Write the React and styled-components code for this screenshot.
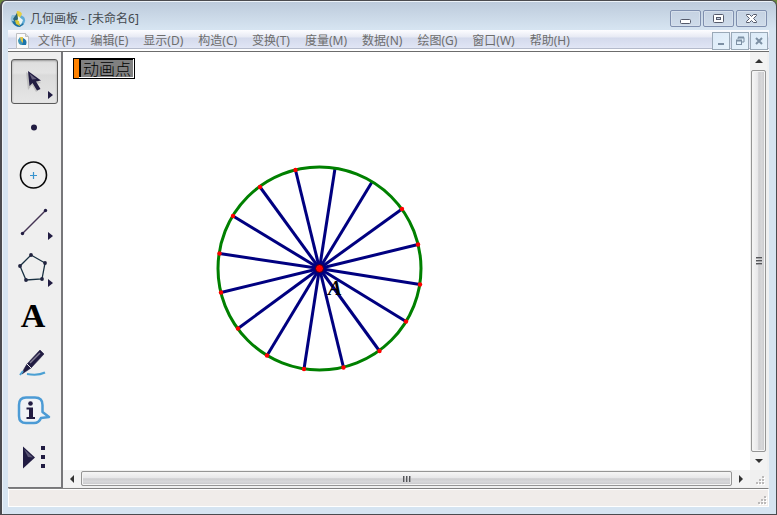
import React from 'react';
import styled, { createGlobalStyle } from 'styled-components';

const Global = createGlobalStyle`
  * { box-sizing: border-box; }
  body { margin: 0; background: #6b8a3c; font-family: "Noto Sans", "Noto Sans CJK SC", sans-serif; font-size: 12px; }
  button { font: inherit; padding: 0; margin: 0; cursor: default; }
  svg { display: block; }
`;

const Window = styled.div`
  display: flex;
  flex-direction: column;
  min-height: 100vh;
  padding: 0 7px 7px 6px;
  border: 1px solid #4b4b4f;
  border-left-width: 2px;
  border-radius: 6px 6px 0 0;
  background: linear-gradient(#bccadb 0, #d6e4f1 28px, #d6e4f1 100%);
  box-shadow: inset 1px 1px 0 #edf3f9;
`;

const TitleBar = styled.header`
  display: flex;
  align-items: center;
  height: 29px;
  padding: 6px 2px 0 2px;
`;

const Title = styled.h1`
  flex: 1;
  margin: 0 0 0 4px;
  font-size: 12px;
  line-height: 18px;
  font-weight: 400;
  color: #44494f;
  white-space: nowrap;
`;

const CaptionButtons = styled.div`
  display: flex;
  gap: 2px;
`;

const CaptionButton = styled.button`
  display: grid;
  place-items: center;
  width: 31px;
  height: 17px;
  border: 1px solid #7f8fae;
  border-radius: 2px;
  background: linear-gradient(#c5d2e2, #cfdcea);
  box-shadow: inset 0 0 0 1px #d6e0ec;
`;

const MenuBar = styled.nav`
  display: flex;
  align-items: center;
  height: 21px;
  padding-left: 7px;
  background: linear-gradient(#fdfdff 0, #e7eaf4 7px, #d4daec 8px, #dfe4f4 17px, #e4e8f4 18px, #b4bacb 18px, #b4bacb 19px, #fff 19px);
`;

const MenuList = styled.div`
  display: flex;
  flex: 1;
  gap: 15px;
  margin-left: 8px;
`;

const MenuItem = styled.button`
  border: 0;
  background: none;
  color: #6d6d6d;
  line-height: 18px;
  white-space: nowrap;
`;

const ChildButtons = styled.div`
  display: flex;
  gap: 1px;
  margin-right: 1px;
`;

const ChildButton = styled.button`
  display: grid;
  place-items: center;
  width: 18px;
  height: 18px;
  border: 1px solid #9aa9b8;
  background: linear-gradient(135deg, #dceaf8, #e6f2fb);
`;

const Body = styled.main`
  display: flex;
  flex: 1;
  border-top: 1px solid #6c6c6c;
  background: #f0f0f0;
`;

const Toolbox = styled.div`
  flex: none;
  display: flex;
  flex-direction: column;
  gap: 2px;
  width: 55px;
  padding: 7px 3px 6px;
  border-right: 2px solid #77777a;
  border-bottom: 1px solid #77777a;
  background: #efefef;
`;

const ToolButton = styled.button`
  display: grid;
  place-items: center;
  width: 47px;
  height: 45px;
  border: 1px solid ${(p) => (p.$active ? '#5a5a5a' : 'transparent')};
  border-radius: 3px;
  background: ${(p) => (p.$active ? 'linear-gradient(#dedede, #e3e3e3 30%, #dadada 35%, #e6e6e6)' : 'none')};
  box-shadow: ${(p) => (p.$active ? 'inset 0 1px 2px #999' : 'none')};
`;

const Document = styled.section`
  flex: 1;
  min-width: 0;
  display: grid;
  grid-template-columns: 1fr 17px;
  grid-template-rows: 1fr 17px;
  padding: 0 2px 1px 0;
`;

const Canvas = styled.div`
  position: relative;
  overflow: hidden;
  background: #fff;
`;

const Sketch = styled.svg`
  position: absolute;
  left: 147px;
  top: 108px;
`;

const ActionButton = styled.button`
  position: absolute;
  left: 10px;
  top: 6px;
  display: flex;
  width: 62px;
  height: 21px;
  border: 1px solid #000;
  background: #fff;
`;

const ActionGrip = styled.span`
  width: 5px;
  height: 19px;
  background: #ff8200;
`;

const ActionLabel = styled.span`
  flex: 1;
  height: 18px;
  border: 0 solid #000;
  border-width: 1px 0 0 2px;
  margin-right: 1px;
  padding-left: 2px;
  background: #808080;
  color: #000;
  font-family: "Noto Sans CJK SC", sans-serif;
  font-weight: 300;
  font-size: 16px;
  line-height: 17px;
  text-align: left;
  white-space: nowrap;
`;

const Scrollbar = styled.div`
  display: flex;
  flex-direction: ${(p) => (p.$vertical ? 'column' : 'row')};
  background: #f0f0f0;
`;

const ScrollArrow = styled.button`
  flex: none;
  display: grid;
  place-items: center;
  width: ${(p) => (p.$vertical ? '17px' : '18px')};
  height: ${(p) => (p.$vertical ? '18px' : '17px')};
  border: 0;
  background: #f3f3f3;
`;

const ScrollThumb = styled.div`
  flex: 1;
  display: grid;
  place-items: center;
  margin: ${(p) => (p.$vertical ? '0 1px' : '1px 0')};
  border: 1px solid #959595;
  border-radius: 2px;
  background: linear-gradient(${(p) => (p.$vertical ? '90deg' : '180deg')}, #f6f6f6, #e7e7e9 45%, #cdcdd0 52%, #d8d8da 75%, #c5c5c8);
  box-shadow: inset 0 0 0 1px #f4f4f4;
`;

const Corner = styled.div`
  display: flex;
  align-items: flex-end;
  justify-content: flex-end;
  padding: 2px;
`;

const StatusBar = styled.footer`
  display: flex;
  align-items: flex-end;
  justify-content: flex-end;
  height: 19px;
  padding: 1px;
  border: 1px solid #fff;
  border-top: 1px solid #808080;
  box-shadow: inset 0 1px 0 #fff;
  background: #f0ecea;
`;

const Logo = () => (
  <svg width="16" height="16" viewBox="0 0 16 16" aria-hidden="true">
    <path d="M2 4Q-1 9 3 13L8 11 5 4Z" fill="#8fbfda" />
    <path d="M9 3L14 6Q17 11 12 15L8 12Z" fill="#5fabd6" />
    <path d="M2 10Q4 16 10 16L14 13 8 11Z" fill="#1b6f9f" />
    <path d="M7 0Q11 0 12 3L8 10 5 9Z" fill="#e6cf42" />
    <path d="M7 2L8 8 5 11 3 8Z" fill="#2b6478" />
    <path d="M8 5L13 9 11 14 8 12Z" fill="#e5f3f5" />
    <path d="M5 9L9 10 10 15 6 13Z" fill="#d8c838" />
  </svg>
);

const DocLogo = () => (
  <svg width="15" height="16" viewBox="0 0 15 16" aria-hidden="true">
    <path d="M1.500.5H10.500L13.500 3.500V15.500H1.500Z" fill="#fafafa" stroke="#bfc0c3" />
    <path d="M10.500.5V3.500H13.500" fill="#ddd" stroke="#bfc0c3" />
    <path d="M3 7L5 4 8 9 7 12Q3 12 3 7" fill="#4298b9" />
    <path d="M8 5Q13 7 11 12H7Z" fill="#1c75aa" />
    <path d="M5 4L8 4 8 10 6 8Z" fill="#dfc64c" />
  </svg>
);

const captionIcons = [
  ['最小化', <svg key="i" width="13" height="12"><rect x="1.500" y="6.500" width="10" height="4" rx="1" fill="#fff" stroke="#555a6b" /></svg>],
  ['最大化', <svg key="i" width="13" height="12"><rect x="1.500" y="1.500" width="10" height="8" rx="1" fill="#fff" stroke="#555a6b" /><rect x="4.500" y="4.500" width="4" height="2" fill="#c5d1e1" stroke="#555a6b" /></svg>],
  ['关闭', <svg key="i" width="13" height="12"><path d="M1.500 1.500H4.500L6.500 3.500 8.500 1.500H11.500V2.500L8.500 5.500 11.500 8.500V9.500H8.500L6.500 7.500 4.500 9.500H1.500V8.500L4.500 5.500 1.500 2.500Z" fill="#fff" stroke="#555a6b" /></svg>],
];

const childIcons = [
  ['最小化文档', <svg key="i" width="10" height="10"><path d="M2 8H8" stroke="#7d90a4" strokeWidth="2" /></svg>],
  ['还原文档', <svg key="i" width="10" height="10"><path d="M3 3V1.500H9V6H7M3 1.500H9" fill="none" stroke="#7d90a4" /><path d="M3 1.500H9M1 4.500H7" stroke="#7d90a4" strokeWidth="2" /><rect x="1.500" y="4.500" width="5" height="4" fill="none" stroke="#7d90a4" /></svg>],
  ['关闭文档', <svg key="i" width="10" height="10"><path d="M2 2L8 8M8 2L2 8" stroke="#7d90a4" strokeWidth="2" /></svg>],
];

const menus = ['文件(F)', '编辑(E)', '显示(D)', '构造(C)', '变换(T)', '度量(M)', '数据(N)', '绘图(G)', '窗口(W)', '帮助(H)'];

const INK = '#211c42';
const More = () => <path d="M37 32V40L42 36Z" fill={INK} />;

const tools = [
  ['移动箭头工具', <>
    <path d="M15 13L17 31 21 26 25 33 29 30 25 25 30 24Z" fill="#aaa" opacity="0.6" />
    <path d="M17 12L18.500 27 21.500 24 26 31.500 29.500 30 25 22.500 30 21.500Z" fill={INK} />
    <path d="M18.500 14.500L25.500 20 21 20.500Z" fill="#67627e" />
    <More />
  </>],
  ['点工具', <circle cx="23" cy="21.500" r="3" fill={INK} />],
  ['圆工具', <><circle cx="22.500" cy="22" r="13" fill="none" stroke="#080808" strokeWidth="1.600" /><path d="M19 22.500H26M22.500 19V26" stroke="#3793ce" strokeWidth="1.200" /></>],
  ['线段工具', <><path d="M11.500 33.500L34.500 10.500" stroke="#453454" strokeWidth="1.500" /><circle cx="11.500" cy="33.500" r="1.700" fill={INK} /><circle cx="34.500" cy="10.500" r="1.700" fill={INK} /><More /></>],
  ['多边形工具', <>
    <path d="M20 8L34 16 31 32 15 33 9 19Z" fill="none" stroke="#183041" strokeWidth="1.300" />
    {[[20, 8], [34, 16], [31, 32], [15, 33], [9, 19]].map(([x, y]) => <circle key={x} cx={x} cy={y} r="1.900" fill="#20233f" />)}
    <More />
  </>],
  ['文本工具', <text x="22" y="33" textAnchor="middle" fontFamily="Liberation Serif, serif" fontWeight="700" fontSize="34" fill="#000">A</text>],
  ['标识工具', <>
    <path d="M16 23L29 9 33 13 20 27 14 31 11 33 13 28Z" fill={INK} stroke={INK} strokeWidth="0.600" />
    <path d="M19 22L29 12" stroke="#858096" strokeWidth="1.500" />
    <path d="M16 23L20 27" stroke="#efefef" />
    <path d="M9 34L12 30M16 33Q27 35 34 31.500" fill="none" stroke="#4ba0d3" strokeWidth="2" />
  </>],
  ['信息工具', <>
    <path d="M15 9.500H24Q31.500 9.500 31.500 17V24L38 29 30 30Q28 35 23 35H15Q8 35 8 28V17Q8 9.500 15 9.500Z" fill="#f0f3f6" stroke="#4c9bd5" strokeWidth="2.500" strokeLinejoin="round" />
    <circle cx="19.500" cy="15.500" r="2.300" fill={INK} />
    <path d="M15.500 19.500H22V29H24V31H15.500V29H18V21.500H15.500Z" fill={INK} />
  </>],
  ['自定义工具', <>
    <path d="M12 11.500V33.500L24 22.500Z" fill={INK} />
    <path d="M13 14L22 22.500 17 22Z" fill="#5c5776" />
    <path d="M30 11H34V15H30ZM30 20H34V24H30ZM30 29H34V33H30Z" fill={INK} />
  </>],
];

const points = [
  [295.5, 170], [260, 187], [233, 216], [219.5, 253.5], [221, 292.5], [238, 328.5], [267, 355.5], [304, 369],
  [343.5, 367.5], [379.5, 351], [406, 321.5], [420, 284.5], [418, 244.5], [402, 209],
];
const plainEnds = [[335, 168.5], [372, 182]];

const Arrow = ({ dir }) => {
  const d = { up: 'M0 6L4 2 8 6Z', down: 'M0 2L4 6 8 2Z', left: 'M6 0L2 4 6 8Z', right: 'M2 0L6 4 2 8Z' }[dir];
  return <svg width="8" height="8" aria-hidden="true"><path d={d} fill="#333" /></svg>;
};

const Grip = ({ vertical }) => (
  <svg width="8" height="8" aria-hidden="true">
    <path d={vertical ? 'M1 .5H7M1 3.500H7M1 6.500H7' : 'M.5 1V7M3.500 1V7M6.500 1V7'} stroke="#55565a" />
    <path d={vertical ? 'M1 1.500H7M1 4.500H7M1 7.500H7' : 'M1.500 1V7M4.500 1V7M7.500 1V7'} stroke="#a5a5a8" />
  </svg>
);

const SizeGrip = () => (
  <svg width="9" height="9" aria-hidden="true">
    {[[6, 0], [3, 3], [6, 3], [0, 6], [3, 6], [6, 6]].map(([x, y]) => (
      <g key={`${x}-${y}`}><rect x={x + 1} y={y + 1} width="2" height="2" fill="#fff" /><rect x={x} y={y} width="2" height="2" fill="#bbb9b9" /></g>
    ))}
  </svg>
);

export default function App() {
  return (
    <>
      <Global />
      <Window>
        <TitleBar>
          <Logo />
          <Title>几何画板 - [未命名6]</Title>
          <CaptionButtons>
            {captionIcons.map(([label, icon]) => <CaptionButton key={label} aria-label={label}>{icon}</CaptionButton>)}
          </CaptionButtons>
        </TitleBar>
        <MenuBar>
          <DocLogo />
          <MenuList>{menus.map((m) => <MenuItem key={m}>{m}</MenuItem>)}</MenuList>
          <ChildButtons>
            {childIcons.map(([label, icon]) => <ChildButton key={label} aria-label={label}>{icon}</ChildButton>)}
          </ChildButtons>
        </MenuBar>
        <Body>
          <Toolbox role="toolbar" aria-label="工具箱">
            {tools.map(([label, icon], i) => (
              <ToolButton key={label} aria-label={label} $active={i === 0}>
                <svg width="45" height="43" viewBox="1 1 45 43" aria-hidden="true">{icon}</svg>
              </ToolButton>
            ))}
          </Toolbox>
          <Document>
            <Canvas>
              <ActionButton><ActionGrip /><ActionLabel>动画点</ActionLabel></ActionButton>
              <Sketch width="220" height="220" viewBox="210 160 220 220">
                {[...points, ...plainEnds].map(([x, y]) => (
                  <line key={`${x}-${y}`} x1="319.500" y1="268.500" x2={x} y2={y} stroke="#000080" strokeWidth="3" />
                ))}
                <circle cx="319.500" cy="268.500" r="101.500" fill="none" stroke="#008000" strokeWidth="3" />
                {points.map(([x, y]) => <circle key={`${x}-${y}`} cx={x} cy={y} r="2.200" fill="#f00" />)}
                <circle cx="319.500" cy="268.500" r="6" fill="#000080" />
                <circle cx="319.500" cy="268.500" r="4" fill="#f00" stroke="#300020" />
                <text x="328" y="295" fontFamily="Liberation Serif, serif" fontStyle="italic" fontWeight="700" fontSize="21" fill="#000">A</text>
              </Sketch>
            </Canvas>
            <Scrollbar $vertical>
              <ScrollArrow $vertical aria-label="向上滚动"><Arrow dir="up" /></ScrollArrow>
              <ScrollThumb $vertical><Grip vertical /></ScrollThumb>
              <ScrollArrow $vertical aria-label="向下滚动"><Arrow dir="down" /></ScrollArrow>
            </Scrollbar>
            <Scrollbar>
              <ScrollArrow aria-label="向左滚动"><Arrow dir="left" /></ScrollArrow>
              <ScrollThumb><Grip /></ScrollThumb>
              <ScrollArrow aria-label="向右滚动"><Arrow dir="right" /></ScrollArrow>
            </Scrollbar>
            <Corner><SizeGrip /></Corner>
          </Document>
        </Body>
        <StatusBar><SizeGrip /></StatusBar>
      </Window>
    </>
  );
}
